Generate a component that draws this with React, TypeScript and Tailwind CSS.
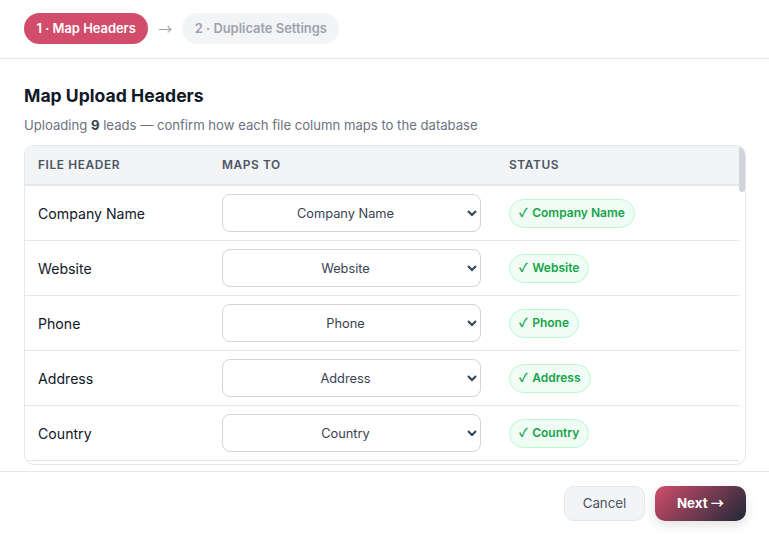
const fields = ['Company Name', 'Website', 'Phone', 'Address', 'Country', 'City', 'State', 'Zip Code']

export default function App() {
  return (
    <div className="flex h-screen flex-col overflow-hidden bg-white font-['Inter',sans-serif]">
      <div className="flex h-[59px] shrink-0 items-center gap-2.5 border-b border-[#e5e7eb] px-6 pb-[1px]">
        <span className="rounded-full bg-[#d14d6b] px-[12.5px] py-[7px] text-[12.9px] leading-[17px] font-semibold text-white">1 · Map Headers</span>
        <span className="font-['Noto_Sans_CJK_JP',sans-serif] text-[14px] text-[#9ca3af]">→</span>
        <span className="rounded-full bg-[#f3f4f6] px-[12.5px] py-[7px] text-[12.9px] leading-[17px] font-semibold text-[#9ca3af]">2 · Duplicate Settings</span>
      </div>

      <div className="flex min-h-0 flex-1 flex-col pt-[25px] pr-[23px] pb-1.5 pl-6">
        <h2 className="text-[17.6px] leading-[24px] font-bold text-[#111827]">Map Upload Headers</h2>
        <p className="mt-[7px] mb-[10px] text-[13.12px] leading-[20px] text-[#6b7280]">
          Uploading <strong className="font-bold text-[#374151]">9</strong> leads — confirm how each file column maps to the database
        </p>
        <div className="relative min-h-0 flex-1 overflow-hidden rounded-[10px] border border-[#e5e7eb]">
          <div className="mr-[6px] h-full overflow-y-auto">
            <table className="w-full border-collapse text-left">
              <thead>
                <tr className="h-[39px] border-b-2 border-[#e5e7eb] bg-[#f3f4f6] text-[11.9px] tracking-[0.6px] text-[#4b5563]">
                  <th className="w-[184px] px-[13px] font-semibold">FILE HEADER</th>
                  <th className="w-[287px] px-[13px] font-semibold">MAPS TO</th>
                  <th className="px-[13px] font-semibold">STATUS</th>
                </tr>
              </thead>
              <tbody>
                {fields.map((field) => (
                  <tr key={field} className="h-[55px] border-b border-[#e5e7eb]">
                    <td className="px-[13px] pt-[2px] text-[14.13px] font-normal text-[#111827]">{field}</td>
                    <td className="px-[13px]">
                      <select defaultValue={field} className="h-[38px] w-[259px] rounded-lg border border-[#d1d5db] bg-white px-2 pt-[1px] text-center text-[12.8px] text-[#374151]">
                        {fields.map((option) => (
                          <option key={option}>{option}</option>
                        ))}
                      </select>
                    </td>
                    <td className="px-[13px] pt-[2px]">
                      <span className="inline-block rounded-full border border-[#bbf7d0] bg-[#f0fdf4] px-[9px] pt-[4px] pb-[6px] text-[12px] leading-[16px] font-semibold whitespace-nowrap text-[#16a34a]">
                        <span className="mr-[1.5px] font-['Noto_Sans_CJK_JP',sans-serif]">✓</span> {field}
                      </span>
                    </td>
                  </tr>
                ))}
              </tbody>
            </table>
          </div>
          <div className="absolute top-0 right-0 h-[46px] w-[6px] rounded-full bg-[#d1d5db]" />
        </div>
      </div>

      <div className="flex h-[65px] shrink-0 items-start justify-end gap-2.5 border-t border-[#e5e7eb] pt-[14px] pr-[23px]">
        <button className="h-[35px] w-[81px] rounded-[10px] border border-[#e5e7eb] bg-[#f3f4f6] text-[13.33px] text-[#4b5563]">Cancel</button>
        <button className="h-[35px] w-[91px] rounded-[10px] bg-linear-[135deg,#d14d6b,#1f2937] text-[13.33px] font-bold text-white shadow-[0_4px_12px_rgba(0,0,0,0.12)]">
          Next <span className="font-['Noto_Sans_CJK_JP',sans-serif]">→</span>
        </button>
      </div>
    </div>
  )
}
